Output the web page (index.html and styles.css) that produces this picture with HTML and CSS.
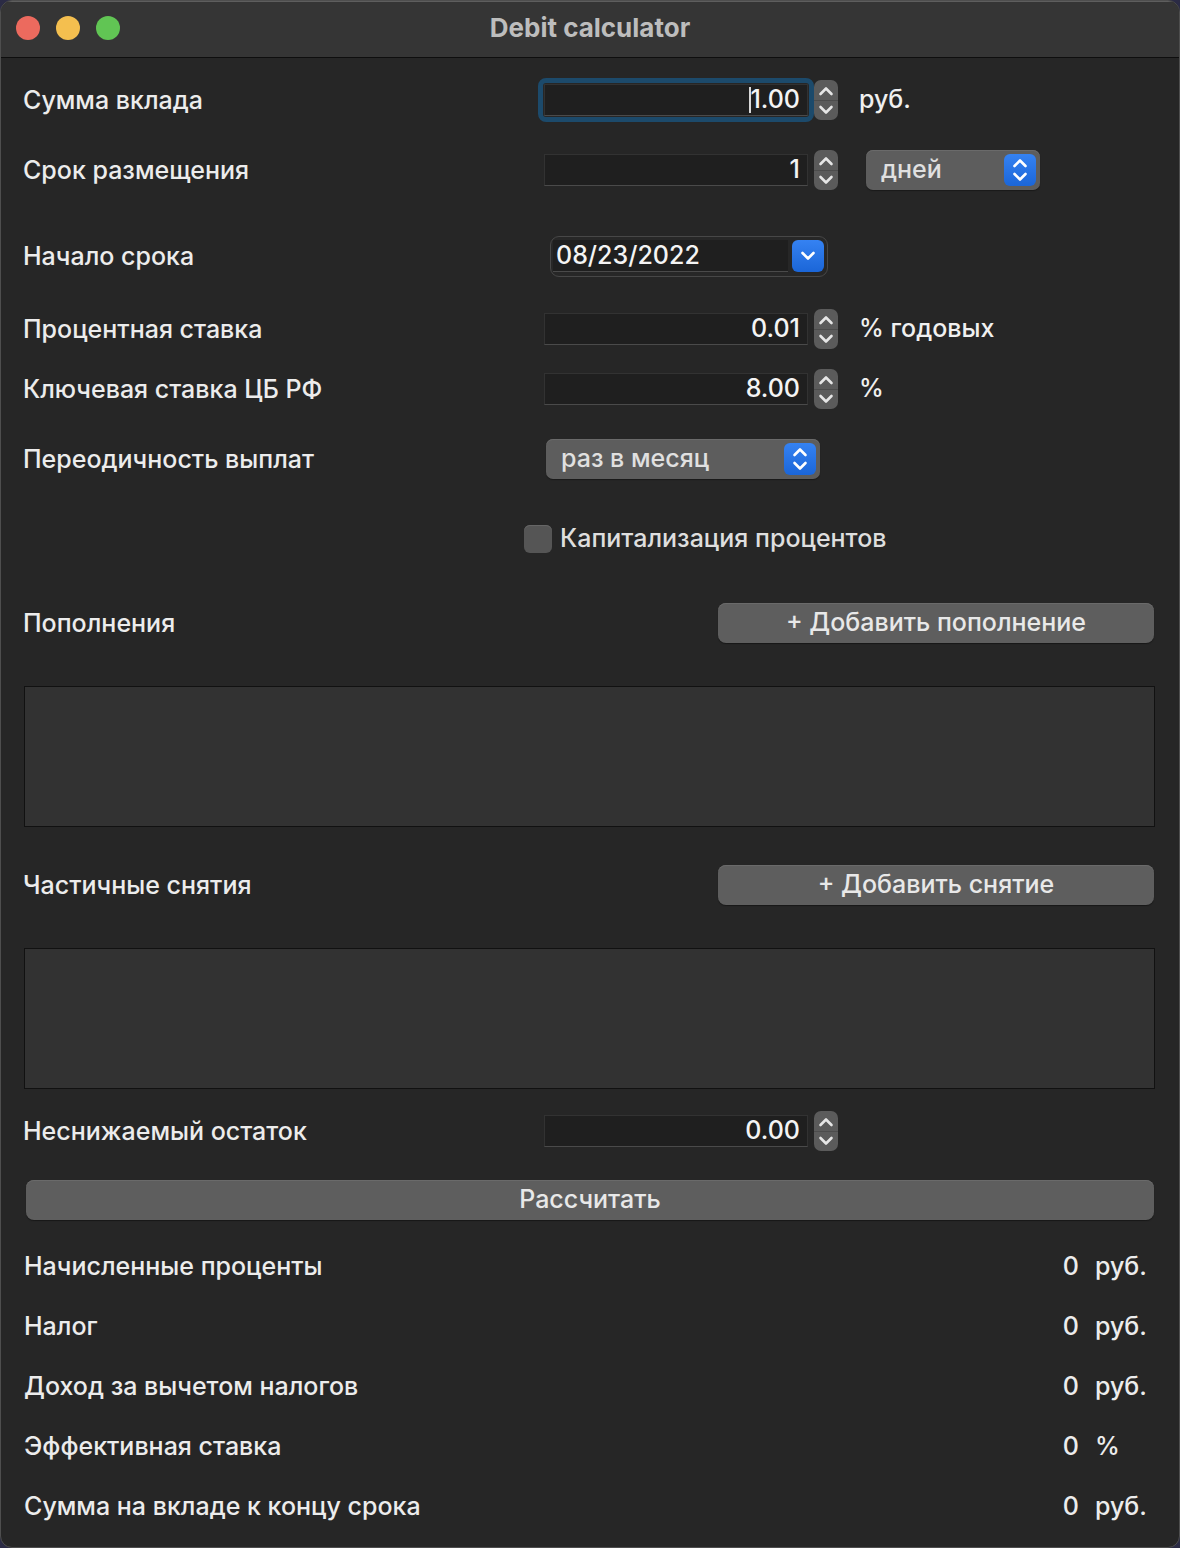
FILE: index.html
```html
<!DOCTYPE html>
<html lang="ru">
<head>
<meta charset="utf-8">
<title>Debit calculator</title>
<link rel="stylesheet" href="styles.css">
</head>
<body>
<div class="window">
  <header class="titlebar">
    <div class="lights">
      <span class="light red"></span>
      <span class="light yellow"></span>
      <span class="light green"></span>
    </div>
    <div class="title">Debit calculator</div>
  </header>

  <main class="content">
    <div class="row r-sum">
      <div class="label">Сумма вклада</div>
      <div class="control">
        <div class="field focused"><span class="caret"></span>1.00</div>
        <div class="stepper">
          <svg viewBox="0 0 24 40" width="24" height="40"><line class="sep" x1="0" y1="20.5" x2="24" y2="20.5"/><path d="M6.5 14 L12 8.5 L17.5 14" /><path d="M6.5 27 L12 32.5 L17.5 27" /></svg>
        </div>
        <span class="unit">руб.</span>
      </div>
    </div>

    <div class="row r-term">
      <div class="label">Срок размещения</div>
      <div class="control">
        <div class="field">1</div>
        <div class="stepper">
          <svg viewBox="0 0 24 40" width="24" height="40"><line class="sep" x1="0" y1="20.5" x2="24" y2="20.5"/><path d="M6.5 14 L12 8.5 L17.5 14" /><path d="M6.5 27 L12 32.5 L17.5 27" /></svg>
        </div>
        <div class="popup popup-days">
          <span class="popup-text">дней</span>
          <span class="blue-btn">
            <svg viewBox="0 0 32 32" width="32" height="32"><path d="M10.5 12 L16 6.5 L21.5 12" /><path d="M10.5 20 L16 25.5 L21.5 20" /></svg>
          </span>
        </div>
      </div>
    </div>

    <div class="row r-start">
      <div class="label">Начало срока</div>
      <div class="control">
        <div class="datepicker">
          <div class="date-field">08/23/2022</div>
          <span class="blue-btn">
            <svg viewBox="0 0 32 32" width="32" height="32"><path d="M10.5 13 L16 18.5 L21.5 13" /></svg>
          </span>
        </div>
      </div>
    </div>

    <div class="row r-rate">
      <div class="label">Процентная ставка</div>
      <div class="control">
        <div class="field">0.01</div>
        <div class="stepper">
          <svg viewBox="0 0 24 40" width="24" height="40"><line class="sep" x1="0" y1="20.5" x2="24" y2="20.5"/><path d="M6.5 14 L12 8.5 L17.5 14" /><path d="M6.5 27 L12 32.5 L17.5 27" /></svg>
        </div>
        <span class="unit">% годовых</span>
      </div>
    </div>

    <div class="row r-key">
      <div class="label">Ключевая ставка ЦБ РФ</div>
      <div class="control">
        <div class="field">8.00</div>
        <div class="stepper">
          <svg viewBox="0 0 24 40" width="24" height="40"><line class="sep" x1="0" y1="20.5" x2="24" y2="20.5"/><path d="M6.5 14 L12 8.5 L17.5 14" /><path d="M6.5 27 L12 32.5 L17.5 27" /></svg>
        </div>
        <span class="unit">%</span>
      </div>
    </div>

    <div class="row r-period">
      <div class="label">Переодичность выплат</div>
      <div class="control">
        <div class="popup popup-period">
          <span class="popup-text">раз в месяц</span>
          <span class="blue-btn">
            <svg viewBox="0 0 32 32" width="32" height="32"><path d="M10.5 12 L16 6.5 L21.5 12" /><path d="M10.5 20 L16 25.5 L21.5 20" /></svg>
          </span>
        </div>
      </div>
    </div>

    <div class="row r-cap">
      <div class="label"></div>
      <div class="control">
        <span class="checkbox"></span>
        <span class="check-label">Капитализация процентов</span>
      </div>
    </div>

    <div class="row r-dep">
      <div class="label">Пополнения</div>
      <button class="btn btn-add">+ Добавить пополнение</button>
    </div>

    <div class="table-box tb-dep"></div>

    <div class="row r-wd">
      <div class="label">Частичные снятия</div>
      <button class="btn btn-add">+ Добавить снятие</button>
    </div>

    <div class="table-box tb-wd"></div>

    <div class="row r-min">
      <div class="label">Неснижаемый остаток</div>
      <div class="control">
        <div class="field">0.00</div>
        <div class="stepper">
          <svg viewBox="0 0 24 40" width="24" height="40"><line class="sep" x1="0" y1="20.5" x2="24" y2="20.5"/><path d="M6.5 14 L12 8.5 L17.5 14" /><path d="M6.5 27 L12 32.5 L17.5 27" /></svg>
        </div>
      </div>
    </div>

    <button class="btn btn-calc">Рассчитать</button>

    <div class="results">
      <div class="result"><span class="res-label">Начисленные проценты</span><span class="res-value">0</span><span class="res-unit">руб.</span></div>
      <div class="result"><span class="res-label">Налог</span><span class="res-value">0</span><span class="res-unit">руб.</span></div>
      <div class="result"><span class="res-label">Доход за вычетом налогов</span><span class="res-value">0</span><span class="res-unit">руб.</span></div>
      <div class="result"><span class="res-label">Эффективная ставка</span><span class="res-value">0</span><span class="res-unit">%</span></div>
      <div class="result"><span class="res-label">Сумма на вкладе к концу срока</span><span class="res-value">0</span><span class="res-unit">руб.</span></div>
    </div>
  </main>
</div>
</body>
</html>
```

FILE: styles.css
```css
* {
  box-sizing: border-box;
}

html, body {
  margin: 0;
  padding: 0;
  background: #2b2b45;
}

body {
  width: 1180px;
  height: 1548px;
  overflow: hidden;
  font-family: "Inter", "Noto Sans", "Liberation Sans", sans-serif;
  font-weight: 500;
  color: #ececec;
}

.window {
  width: 1180px;
  height: 1548px;
  background: #262626;
  border: 1px solid #4e4e4e;
  border-radius: 12px;
  overflow: hidden;
  display: flex;
  flex-direction: column;
}

.titlebar {
  height: 57px;
  flex: none;
  background: #353535;
  border-bottom: 1px solid #0e0e0e;
  box-shadow: inset 0 1px 0 #5e5e5e;
  display: flex;
  align-items: center;
  justify-content: center;
  position: relative;
}

.lights {
  position: absolute;
  left: 15px;
  top: 15px;
  display: flex;
  gap: 16px;
}

.light {
  width: 24px;
  height: 24px;
  border-radius: 50%;
  display: block;
}

.light.red { background: #ec6a5e; }
.light.yellow { background: #f4bf4f; }
.light.green { background: #61c554; }

.title {
  font-size: 26px;
  font-weight: 700;
  color: #bdbdbd;
  margin-top: -4px;
}

.content {
  flex: 1;
  padding: 0 24px 0 22px;
  display: flex;
  flex-direction: column;
  font-size: 25px;
}

.row {
  height: 40px;
  display: flex;
  align-items: center;
  flex: none;
}

.label {
  width: 521px;
  flex: none;
  color: #ececec;
  margin-top: -1px;
}

.control {
  display: flex;
  align-items: center;
}

.r-sum { margin-top: 22px; }
.r-term { margin-top: 30px; }
.r-start { margin-top: 46px; }
.r-rate { margin-top: 33px; }
.r-key { margin-top: 20px; }
.r-period { margin-top: 30px; }
.r-cap { margin-top: 40px; }
.r-dep { margin-top: 44px; }
.r-wd { margin-top: 38px; }
.r-min { margin-top: 22px; }

.field {
  width: 264px;
  height: 32px;
  background: #1f1f1f;
  border: 1px solid #323232;
  border-bottom-color: #4a4a4a;
  text-align: right;
  padding-right: 7px;
  line-height: 29px;
  color: #f4f4f4;
  position: relative;
}

.field.focused::before {
  content: "";
  position: absolute;
  left: -7px;
  top: -7px;
  right: -7px;
  bottom: -7px;
  border: 5px solid #1c4a6b;
  border-radius: 8px;
}

.caret {
  display: inline-block;
  width: 2px;
  height: 26px;
  background: #d8d8d8;
  vertical-align: -5px;
  margin-right: -1px;
}

.stepper {
  width: 24px;
  height: 40px;
  margin-left: 6px;
  background: #5b5b5b;
  border-radius: 7px;
  flex: none;
}

.stepper svg {
  display: block;
}

.stepper path {
  fill: none;
  stroke: #e6e6e6;
  stroke-width: 2.6;
  stroke-linecap: round;
  stroke-linejoin: round;
}

.stepper .sep {
  stroke: #4c4c4c;
  stroke-width: 1;
}

.unit {
  margin-left: 21px;
  color: #f0f0f0;
  margin-top: -2px;
}

.popup {
  height: 40px;
  background: #5d5d5d;
  border-radius: 7px;
  box-shadow: inset 0 1px 0 #6a6a6a, 0 1px 1px #1a1a1a;
  display: flex;
  align-items: center;
  justify-content: space-between;
  padding: 0 4px 0 15px;
}

.popup-text {
  color: #e0e0e0;
  margin-top: -2px;
}

.popup-days {
  width: 174px;
  margin-left: 28px;
}

.popup-period {
  width: 274px;
  margin-left: 2px;
}

.blue-btn {
  width: 32px;
  height: 32px;
  border-radius: 6px;
  background: linear-gradient(#3582f2, #1b66d8);
  display: block;
  flex: none;
}

.blue-btn svg {
  display: block;
}

.blue-btn path {
  fill: none;
  stroke: #ffffff;
  stroke-width: 2.6;
  stroke-linecap: round;
  stroke-linejoin: round;
}

.datepicker {
  width: 278px;
  height: 41px;
  margin-left: 6px;
  border: 1px solid #474747;
  border-radius: 9px;
  background: #272727;
  display: flex;
  align-items: center;
  padding: 0 3px 0 2px;
  gap: 4px;
}

.date-field {
  width: 235px;
  height: 32px;
  background: #1f1f1f;
  border-bottom: 1px solid #4a4a4a;
  line-height: 30px;
  padding-left: 3px;
  color: #f4f4f4;
}

.checkbox {
  width: 28px;
  height: 28px;
  border-radius: 6px;
  background: #555;
  box-shadow: inset 0 1px 0 #666;
  margin-left: -20px;
  flex: none;
}

.check-label {
  margin-left: 8px;
  color: #dedede;
  margin-top: -2px;
}

.btn {
  font-family: inherit;
  font-weight: 500;
  border: none;
  background: #5e5e5e;
  border-radius: 8px;
  color: #e8e8e8;
  font-size: 25px;
  height: 40px;
  line-height: 36px;
  box-shadow: inset 0 1px 0 #6a6a6a, 0 1px 1px #181818;
  padding: 0 0 3px;
}

.btn-add {
  width: 436px;
  margin-left: 174px;
}

.table-box {
  height: 141px;
  width: 1131px;
  margin-left: 1px;
  background: #323232;
  border: 1px solid #111;
  flex: none;
}

.tb-dep { margin-top: 43px; }
.tb-wd { margin-top: 43px; }

.btn-calc {
  width: 1128px;
  margin-left: 3px;
  margin-top: 29px;
  flex: none;
}

.results {
  margin-top: 27px;
  display: flex;
  flex-direction: column;
  gap: 20px;
}

.result {
  height: 40px;
  display: flex;
  align-items: center;
  padding-bottom: 2px;
}

.res-label {
  flex: 1;
  margin-left: 1px;
  color: #ececec;
}

.res-value {
  text-align: right;
}

.res-unit {
  width: 60px;
  margin-left: 16px;
}
```
